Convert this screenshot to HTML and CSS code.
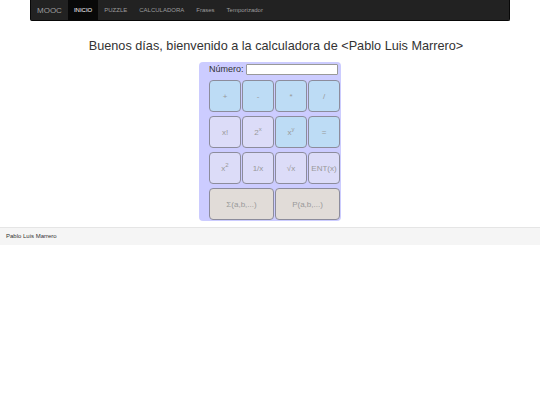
FILE: index.html
```html
<!DOCTYPE html>
<html lang="es">
<head>
  <meta charset="UTF-8" />
  <title>MOOC - Calculadora</title>
  <link rel="stylesheet" href="styles.css">
</head>
<body>
  <nav class="navbar">
    <span class="brand">MOOC</span>
    <a class="active" href="#">INICIO</a>
    <a href="#">PUZZLE</a>
    <a href="#">CALCULADORA</a>
    <a href="#">Frases</a>
    <a href="#">Temporizador</a>
  </nav>

  <h1 class="title">Buenos días, bienvenido a la calculadora de &lt;Pablo Luis Marrero&gt;</h1>

  <div class="calc">
    <div class="display">
      <label for="num">Número:</label>
      <input type="text" id="num" />
    </div>
    <div class="keys">
      <button class="op">+</button>
      <button class="op">-</button>
      <button class="op">*</button>
      <button class="op">/</button>
      <button class="fn">x!</button>
      <button class="fn">2<sup>x</sup></button>
      <button class="op">x<sup>y</sup></button>
      <button class="op">=</button>
      <button class="fn">x<sup>2</sup></button>
      <button class="fn">1/x</button>
      <button class="fn">√x</button>
      <button class="fn">ENT(x)</button>
      <button class="list wide">Σ(a,b,...)</button>
      <button class="list wide">P(a,b,...)</button>
    </div>
  </div>

  <footer class="footer">Pablo Luis Marrero</footer>
</body>
</html>
```

FILE: styles.css
```css
* {
  box-sizing: border-box;
}
body {
  margin: 0;
  font-family: "Liberation Sans", Arial, sans-serif;
  color: #333;
  background: #fff;
}
.navbar {
  margin: 0 30px;
  height: 21px;
  background: #222;
  border: 1px solid #080808;
  border-top: none;
  border-radius: 0 0 2px 2px;
  display: flex;
  align-items: stretch;
  padding-left: 6px;
}
.navbar .brand {
  color: #9d9d9d;
  font-size: 8px;
  line-height: 21px;
  padding-right: 6px;
}
.navbar a {
  color: #9d9d9d;
  font-size: 6px;
  line-height: 21px;
  text-decoration: none;
  padding: 0 6px;
}
.navbar a.active {
  color: #fff;
  background: #080808;
}
.title {
  margin: 18px 0 8px;
  padding-left: 12px;
  text-align: center;
  font-size: 12.7px;
  font-weight: normal;
  line-height: 15px;
}
.calc {
  width: 142px;
  margin: 0 auto;
  background: #ccf;
  border-radius: 4px;
  padding: 1px 1px 1px 10px;
}
.display {
  display: flex;
  align-items: center;
  font-size: 9px;
  height: 12px;
  gap: 2px;
}
.display label {
  color: #333;
}
.display input {
  width: 92px;
  height: 11px;
  border: 1px solid #999;
  border-radius: 1px;
  padding: 0;
  background: #fff;
}
.keys {
  margin-top: 5px;
  display: grid;
  grid-template-columns: repeat(4, 32px);
  grid-auto-rows: 32px;
  column-gap: 1px;
  row-gap: 4px;
}
.keys button {
  font-family: "Liberation Sans", Arial, sans-serif;
  font-size: 8px;
  color: #999;
  border: 1px solid #8c8c9c;
  border-radius: 4px;
  padding: 0;
  cursor: pointer;
}
.keys sup {
  font-size: 6px;
  line-height: 0;
}
.keys .op {
  background: #bddcf5;
}
.keys .fn {
  background: #dcdcf8;
}
.keys .list {
  background: #e1dcd8;
}
.keys .wide {
  grid-column: span 2;
}
.footer {
  margin-top: 6px;
  background: #f5f5f5;
  border-top: 1px solid #e5e5e5;
  height: 18px;
  line-height: 17px;
  font-size: 6px;
  padding-left: 6px;
  color: #333;
}
```
